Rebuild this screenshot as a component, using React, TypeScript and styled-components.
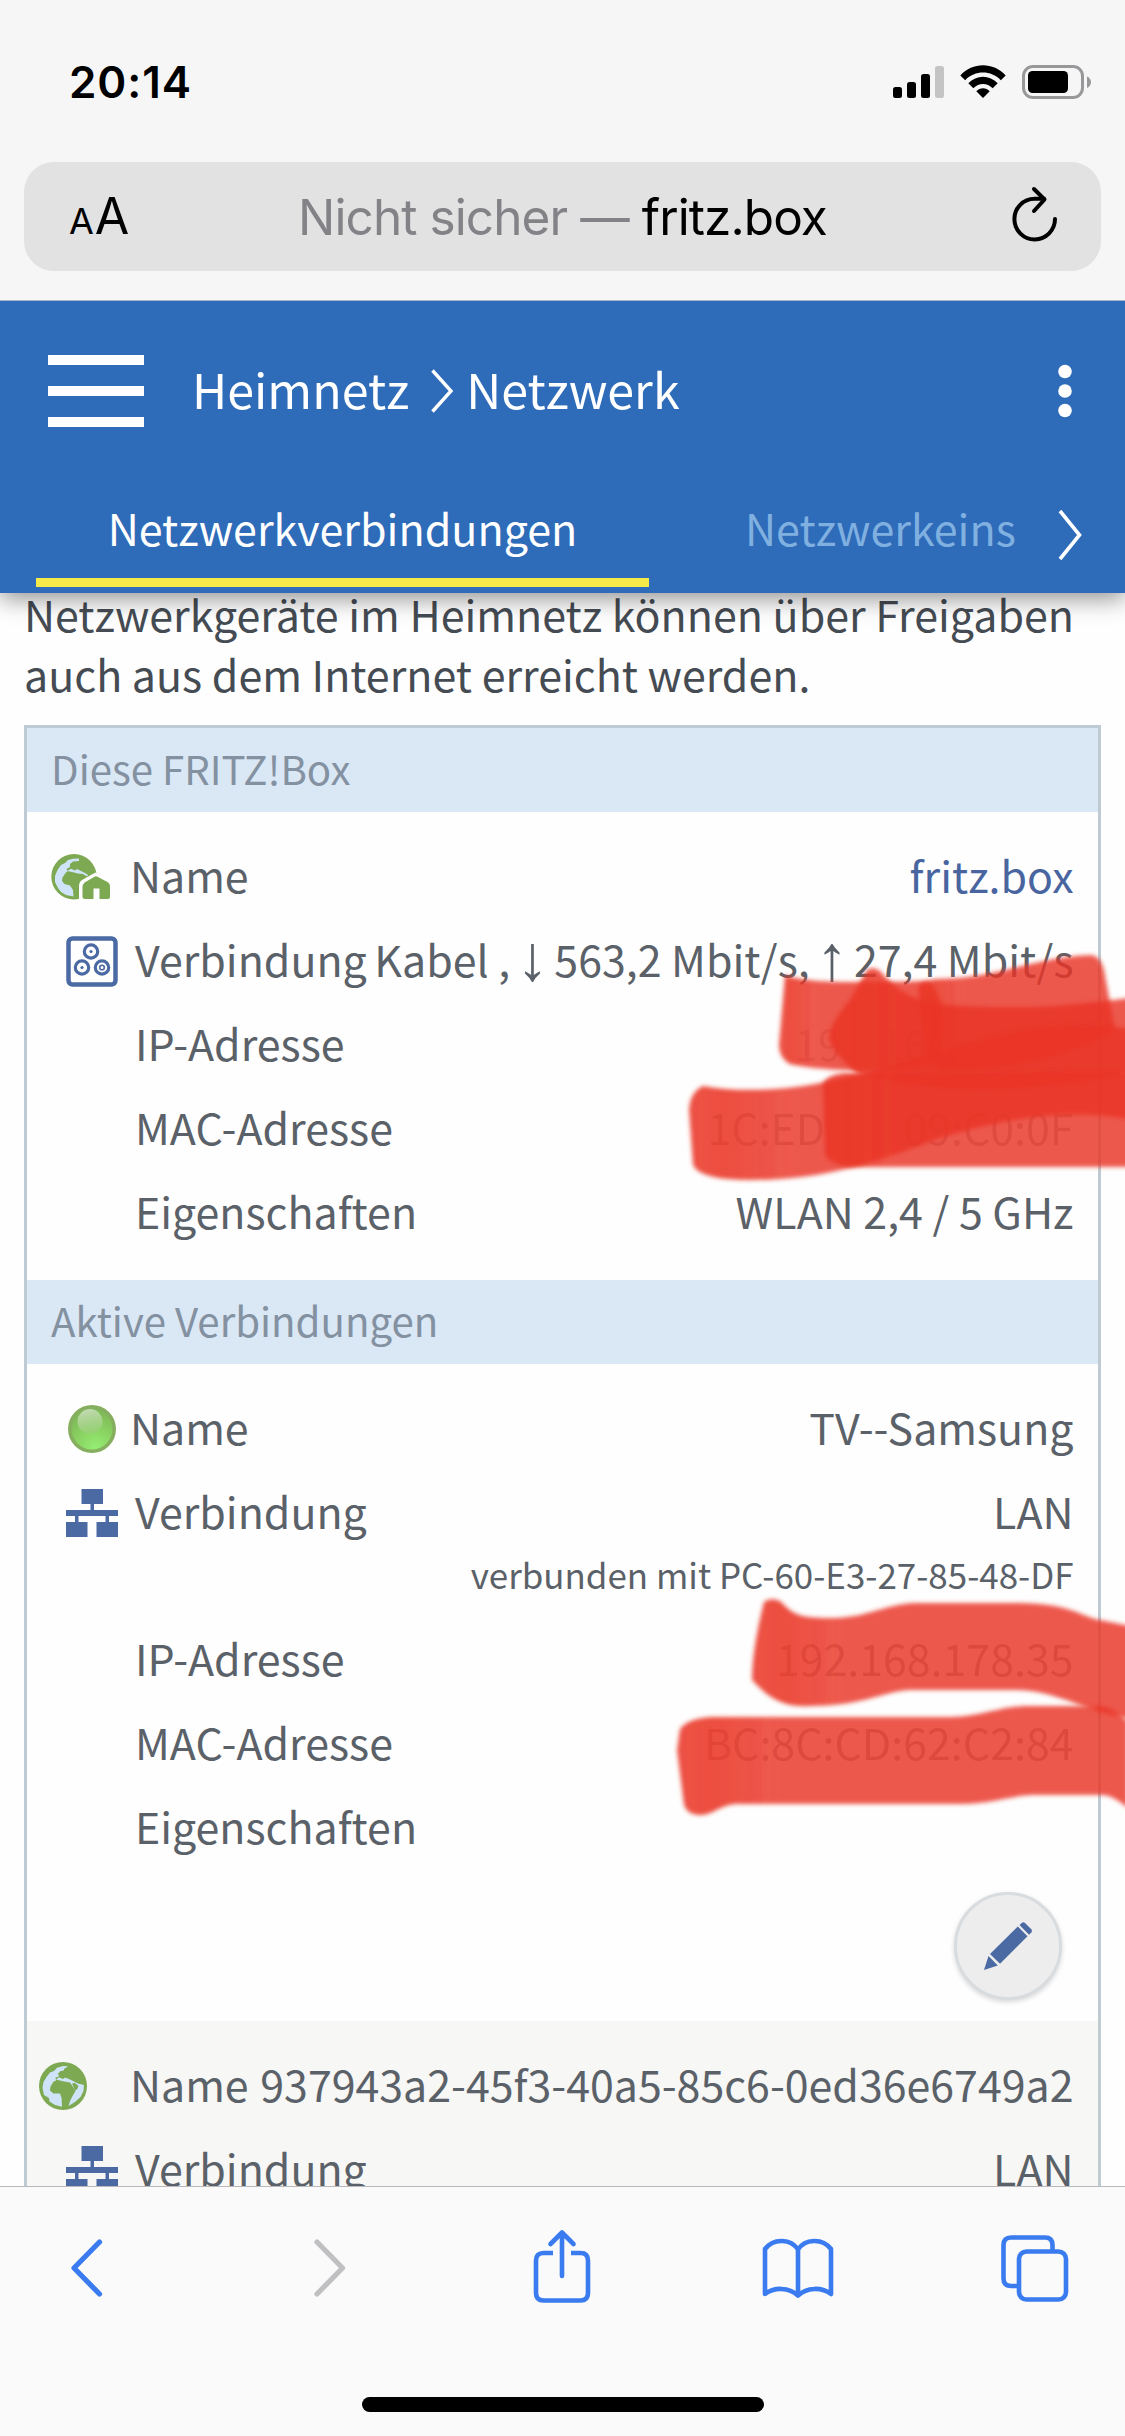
import React from "react";
import styled, { createGlobalStyle } from "styled-components";

const sans = '"Noto Sans CJK SC", "Noto Sans", sans-serif';
const system = 'Inter, "Liberation Sans", sans-serif';

const GlobalStyle = createGlobalStyle`
  *, *::before, *::after { box-sizing: border-box; }
  body { margin: 0; background: #fff; }
  svg { display: block; flex: none; }
`;

const Screen = styled.div`
  position: relative;
  display: flex;
  flex-direction: column;
  width: 1125px;
  height: 2436px;
  overflow: hidden;
  background: #fefefe;
  font-family: ${sans};
`;

/* ---------- browser chrome ---------- */

const BrowserTop = styled.header`
  position: relative;
  z-index: 2;
  flex: none;
  height: 301px;
  background: #f6f6f7;
  border-bottom: 1px solid #a9b7c8;
  font-family: ${system};
`;

const StatusBar = styled.div`
  display: flex;
  align-items: center;
  justify-content: space-between;
  height: 162px;
  padding: 2px 34px 0 69px;
`;

const Clock = styled.span`
  font-size: 44px;
  font-weight: 600;
  letter-spacing: 0.9px;
  color: #000;
`;

const StatusIcons = styled.div`
  display: flex;
  align-items: center;
  gap: 16px;
`;

const AddressBar = styled.div`
  display: flex;
  align-items: center;
  justify-content: space-between;
  height: 109px;
  margin: 0 24px;
  padding: 0 43px 0 45px;
  border-radius: 30px;
  background: #e2e2e3;
`;

const TextSize = styled.span`
  width: 72px;
  padding-top: 5px;
  font-size: 50px;
  line-height: 107px;
  letter-spacing: -1px;
  white-space: nowrap;
  color: #000;
  small { font-size: 36px; margin-right: 2px; }
`;

const Address = styled.span`
  padding: 2px 28px 0 0;
  font-size: 49.5px;
  line-height: 107px;
  letter-spacing: -0.92px;
  white-space: pre;
  color: #000;
`;

const Muted = styled.span`
  color: #838387;
`;

/* ---------- page header ---------- */

const PageHeader = styled.div`
  position: relative;
  z-index: 1;
  flex: none;
  height: 292px;
  background: #2e6bb9;
  box-shadow: 0 6px 22px rgba(0, 0, 0, 0.42);
  color: #fff;
`;

const TitleRow = styled.div`
  display: flex;
  align-items: center;
  height: 180px;
  padding: 0 53px 0 48px;
`;

const MenuButton = styled.div`
  display: flex;
  flex-direction: column;
  gap: 21px;
  width: 96px;
  margin-right: 48px;
  span { height: 10px; background: #fff; }
`;

const Crumb = styled.span`
  padding-bottom: 6px;
  font-size: 48.4px;
  line-height: 174px;
  white-space: nowrap;
`;

const CrumbArrow = styled.svg`
  margin: 0 12px 0 21px;
`;

const MoreIcon = styled.svg`
  margin-left: auto;
`;

const Tabs = styled.div`
  display: flex;
  align-items: flex-start;
  padding-left: 36px;
`;

const Tab = styled.div<{ $active?: boolean }>`
  width: 613px;
  height: 106px;
  border-bottom: 9px solid ${(p) => (p.$active ? "#f6ea4b" : "transparent")};
  font-size: 43px;
  line-height: 92px;
  text-align: center;
  white-space: nowrap;
  color: ${(p) => (p.$active ? "#fff" : "#80b0e0")};
`;

const ClippedTab = styled(Tab)`
  width: 367px;
  padding-left: 96px;
  text-align: left;
`;

const TabNext = styled.svg`
  margin: 28px 0 0 41px;
`;

/* ---------- content ---------- */

const Content = styled.main`
  flex: 1;
  min-height: 0;
  overflow: hidden;
  padding: 0 24px;
`;

const Intro = styled.p`
  height: 132px;
  margin: 0;
  font-size: 42.95px;
  line-height: 60px;
  white-space: nowrap;
  color: #454b53;
  span { display: block; }
  span:first-child { height: 50px; line-height: 40px; }
`;

const Table = styled.section`
  height: 1600px;
  border: 3px solid #bfcbd3;
`;

const SectionTitle = styled.h2`
  height: 84px;
  margin: 0;
  padding: 0 25px 0 24px;
  background: #dae7f5;
  font-size: 40.2px;
  font-weight: 400;
  line-height: 79px;
  color: #8391a1;
`;

const Device = styled.div<{ $alt?: boolean; $bottom?: number }>`
  padding: 20px 24.5px ${(p) => p.$bottom ?? 0}px 0;
  background: ${(p) => (p.$alt ? "#f7f7f5" : "#fefefe")};
`;

const Row = styled.div`
  display: flex;
  align-items: center;
  height: 84px;
  font-size: 42.9px;
  line-height: 84px;
  white-space: nowrap;
  color: #5b6168;
`;

const IconSlot = styled.div<{ $left: number; $width?: number }>`
  flex: none;
  width: ${(p) => p.$width ?? 108}px;
  padding-top: 6px;
  padding-left: ${(p) => p.$left}px;
`;

const Value = styled.span<{ $link?: boolean; $faint?: number }>`
  display: flex;
  align-items: center;
  margin-left: auto;
  white-space: pre;
  opacity: ${(p) => p.$faint ?? 1};
  color: ${(p) => (p.$link ? "#48659f" : "inherit")};
`;

const Arrow = styled.span`
  margin: 0 -3.5px;
  font-family: "Liberation Sans", sans-serif;
  font-size: 64px;
`;

const Gap = styled.span<{ $w: number }>`
  width: ${(p) => p.$w}px;
`;

const SubRow = styled.div`
  height: 63px;
  padding-top: 1px;
  font-size: 34.95px;
  line-height: 42px;
  text-align: right;
  white-space: nowrap;
  color: #5b6168;
`;

const Actions = styled.div`
  display: flex;
  justify-content: flex-end;
  padding: 25px 11.5px 21px 0;
`;

const EditButton = styled.button`
  display: flex;
  align-items: center;
  justify-content: center;
  width: 108px;
  height: 108px;
  padding: 0;
  border: 3px solid #d9dcdf;
  border-radius: 50%;
  background: #ededee;
  box-shadow: 0 2px 5px rgba(0, 0, 0, 0.16);
`;

const Marker = styled.svg`
  position: absolute;
  top: 940px;
  left: 660px;
  pointer-events: none;
`;

/* ---------- bottom toolbar ---------- */

const Toolbar = styled.footer`
  display: flex;
  flex-direction: column;
  flex: none;
  align-items: center;
  justify-content: space-between;
  height: 250px;
  padding: 42px 0 24px;
  border-top: 1px solid #b9b9bb;
  background: #fafafa;
`;

const ToolbarIcons = styled.div`
  display: grid;
  grid-template-columns: repeat(5, 236.5px);
  justify-content: center;
  justify-items: center;
  width: 100%;
  padding-right: 2px;
`;

const HomeIndicator = styled.div`
  width: 402px;
  height: 15px;
  border-radius: 8px;
  background: #000;
`;

/* ---------- icons ---------- */

const Signal = () => (
  <svg width="51" height="34" viewBox="0 0 51 34">
    <rect x="0" y="22" width="9" height="11" rx="2.5" />
    <rect x="14" y="17" width="9" height="16" rx="2.5" />
    <rect x="28" y="9" width="9" height="24" rx="2.5" />
    <rect x="42" y="1" width="9" height="32" rx="2.5" fill="#c4c4c5" />
  </svg>
);

const Wifi = () => (
  <svg width="46" height="34" viewBox="0 0 46 34">
    <path d="M0.3 10.4 C12.5-3.2 33.5-3.2 45.7 10.4 L40.8 15.2 C31 5 15 5 5.2 15.2Z" />
    <path d="M8.3 18.3 C16.4 9.4 29.6 9.4 37.7 18.3 L32.7 23.2 C27.2 17.5 18.8 17.5 13.3 23.2Z" />
    <path d="M16.3 26.3 C20 22.3 26 22.3 29.7 26.3 L23 33Z" />
  </svg>
);

const Battery = () => (
  <svg width="69" height="34" viewBox="0 0 69 34">
    <rect x="1.5" y="1.5" width="59" height="31" rx="9.5" fill="none" stroke="#98989a" strokeWidth="3" />
    <rect x="6" y="6" width="40" height="22" rx="4.5" />
    <path d="M65 11.5 C70.3 14 70.3 20.500 65 23Z" fill="#98989a" />
  </svg>
);

const Reload = () => (
  <svg width="46" height="62" viewBox="0 0 46 62" fill="none" stroke="#000" strokeWidth="4" strokeLinecap="round" strokeLinejoin="round">
    <path d="M43 33 A20.300 20.300 0 1 1 22.500 12.800 H32" />
    <path d="M22 3 L32.500 13.500 L22 25" />
  </svg>
);

const Globe = () => (
  <svg width="48" height="48" viewBox="0 0 48 48">
    <circle cx="24" cy="24" r="24" fill="#7ca952" />
    <path
      fill="#cfe4f8"
      d="M29 4.300 L24 4 L18 5.800 L15 9 L11 10.500 L7.500 15 L4.500 20 L3.500 26 L5 33 L10 36 L10.500 39.500 L16 43 L23 44.800 L22.600 36 L21 31.500 L14.500 31.500 L11 28.500 L11.500 24.500 L14.500 19.800 L17 18.500 L16.500 15.500 L20 14.500 L19 11.500 L22 9 L25 9.500 L25 7Z"
    />
    <path fill="#cfe4f8" d="M17 17.500 L20 15.300 L24 17 L26 15.500 L30 17 L34 19 L39 21.500 L45 23 L44.500 29 L41.500 35 L36 40 L29.500 44 L31 39 L33 35 L36.500 29 L34 25 L31 20.500 L25 19.500 L21 18.500Z" />
    <path fill="#7ca952" d="M21 9.500 l5 -1.500 l-3 5 l-3 0Z" />
    <path fill="#7ca952" d="M33 21.500 L36 21 L39.500 24 L38 27.500 L36 28.500Z" />
  </svg>
);

const GlobeHome = () => (
  <svg width="60" height="46" viewBox="0 0 60 46">
    <circle cx="23" cy="22.800" r="22.700" fill="#7ca952" />
    <path
      fill="#cfe4f8"
      d="M28 4.500 L22 4.800 L17 6 L14 9 L10 11 L6.500 16 L4 22 L4 28 L7 34 L10 38 L15 41 L22.500 42.500 L22 36 L19 31.500 L13.500 30 L11 27 L11.500 23.500 L14.500 19 L16.500 17.500 L15.500 15 L19 13 L19 10 L22 7.500 L28 7Z"
    />
    <path fill="#cfe4f8" d="M16 17 L20 14.800 L24 16.500 L26 15 L30 17 L34 19 L37 21 L36 22.500 L32 20 L27 19.500 L21 18Z" />
    <path fill="#fefefe" d="M28 46 V32 Q28 28 31 26 L44.500 18.500 L60 27 V46Z" />
    <path fill="#7ca952" d="M31.500 32.500 Q31.500 30 34 28.300 L44 22.500 Q45 22 46 22.500 L56.500 28 Q59 29.500 59 32 V43 Q59 45 57 45 H48.500 V34.500 H42.500 V45 H34 Q31.500 45 31.500 42.500Z" />
  </svg>
);

const CableSocket = () => (
  <svg width="52" height="51" viewBox="0 0 52 51" fill="none" stroke="#4b69a3">
    <rect x="2.500" y="2.500" width="47" height="46" rx="4" strokeWidth="4.500" />
    <g strokeWidth="3.200">
      <circle cx="25" cy="15.500" r="6.700" />
      <circle cx="16" cy="31.500" r="6.700" />
      <circle cx="36" cy="31.500" r="6.700" />
    </g>
    <g fill="#4b69a3" stroke="none">
      <circle cx="25" cy="15.500" r="1.600" />
      <circle cx="16" cy="31.500" r="1.600" />
    </g>
    <circle cx="36" cy="31.500" r="2.300" strokeWidth="1.600" />
  </svg>
);

const Online = () => (
  <svg width="48" height="48" viewBox="0 0 48 48">
    <defs>
      <radialGradient id="ball" cx="0.58" cy="0.95" r="0.85">
        <stop offset="0" stopColor="#94ee74" />
        <stop offset="0.6" stopColor="#89d060" />
        <stop offset="1" stopColor="#7fba58" />
      </radialGradient>
      <linearGradient id="gloss" x1="0.400" y1="0" x2="0.600" y2="1">
        <stop offset="0" stopColor="#c4dbb4" />
        <stop offset="1" stopColor="#97cf76" stopOpacity="0.700" />
      </linearGradient>
    </defs>
    <circle cx="24" cy="24" r="24" fill="#85ae5f" />
    <circle cx="24" cy="24" r="20.500" fill="url(#ball)" />
    <ellipse cx="22" cy="16.500" rx="12.500" ry="12.500" fill="url(#gloss)" />
  </svg>
);

const Lan = () => (
  <svg width="52" height="48" viewBox="0 0 52 48" fill="#4b69a3">
    <path d="M15.500 0 H37 V15 H28 V21 H52 V27 H43 V33 H52 V48 H30.500 V33 H39.500 V27 H12.500 V33 H21.500 V48 H0 V33 H9 V27 H0 V21 H24.500 V15 H15.500Z" />
  </svg>
);

const Pencil = () => (
  <svg width="48" height="48" viewBox="0 0 48 48" fill="#4b69a3">
    <path d="M35.500 3 L38 .8 Q39.500 -.3 41 1 L47.300 7.300 Q48.500 9 47.300 10.500 L45 12.700Z" />
    <path d="M33.800 4.600 L43.500 14.300 L16 41.800 L6 32Z" />
    <path d="M4.500 34 L13.800 43.500 L0 48Z" />
  </svg>
);

const blue = "#3a7bf0";
const line = { fill: "none", stroke: blue, strokeWidth: 4.6, strokeLinecap: "round", strokeLinejoin: "round" } as const;

const Back = () => (
  <svg width="42" height="74" viewBox="0 0 42 74" {...line} strokeWidth={5.2}>
    <path d="M31.500 13 L6 39 L31.500 65" />
  </svg>
);

const Forward = () => (
  <svg width="42" height="74" viewBox="0 0 42 74" {...line} strokeWidth={5.2} stroke="#c0c0c2">
    <path d="M13 13 L38.500 39 L13 65" />
  </svg>
);

const Share = () => (
  <svg width="58" height="74" viewBox="0 0 58 74" {...line}>
    <path strokeLinecap="butt" d="M20 24 H10.500 Q3 24 3 31.500 V64 Q3 71.500 10.500 71.500 H47.500 Q55 71.500 55 64 V31.500 Q55 24 47.500 24 H38" />
    <path d="M29 47 V4 M17.500 15 L29 3.500 L40.500 15" />
  </svg>
);

const Book = () => (
  <svg width="72" height="74" viewBox="0 0 72 74" {...line}>
    <path d="M36 20.500 C29 10 12 8.500 3 20 V65 C12 58 27 58 36 66.500 C45 58 60 58 69 65 V20 C60 8.500 43 10 36 20.500Z M36 20.500 V66" />
  </svg>
);

const TabsIcon = () => (
  <svg width="70" height="74" viewBox="0 0 70 74" {...line}>
    <path strokeLinecap="butt" d="M18 57 H11 Q3.500 57 3.500 49.500 V16 Q3.500 8.500 11 8.500 H45 Q52.500 8.500 52.500 16 V22" />
    <rect x="19" y="22.500" width="47" height="48" rx="7.500" />
  </svg>
);

const strokes = [
  "M785 975 C805 983 850 983 925 981 C948 984 950 1066 925 1066 C880 1074 815 1070 790 1064 Q779 1058 779 1045Z",
  "M918 988 Q920 980 940 979 C1000 978 1030 958 1090 955 Q1100 955 1104 970 L1115 1030 C1060 1060 1000 1070 940 1070 Q925 1060 924 1040Z",
  "M867 970 Q873 966 880 971 C905 1000 925 1006 1000 1007 C1060 1008 1090 1002 1140 997 V1070 C1040 1095 930 1090 885 1080 L858 1074 Q829 1050 829 1036 Q832 1020 850 1000Z",
  "M703 1086 C740 1093 790 1090 830 1081 C900 1066 960 1040 1040 1028 Q1090 1022 1140 1030 V1122 C1080 1108 1020 1114 940 1138 C870 1165 820 1180 750 1180 Q700 1180 693 1165 L689 1110 Q690 1092 703 1086Z",
  "M823 1085 Q825 1075 845 1073 C950 1076 1040 1070 1140 1072 V1167 H850 Q830 1164 825 1155Z",
  "M764 1602 Q770 1597 780 1601 C795 1617 803 1618 834 1618 C870 1617 885 1604 915 1603 H1002 C1060 1602 1070 1610 1095 1619 L1140 1628 V1720 C1085 1714 1060 1690 1015 1690 H908 C880 1693 860 1706 810 1706 C780 1708 765 1694 752 1680 Q752 1650 764 1602Z",
  "M680 1729 Q688 1718 712 1717 H951 C980 1717 1000 1706 1028 1706 H1102 Q1118 1710 1128 1722 V1808 Q1112 1795 1102 1795 H1032 C1010 1796 990 1804 961 1804 H735 C718 1806 712 1816 698 1815 Q687 1814 684 1805 L677 1750Z",
];

const Scribbles = () => (
  <Marker width="465" height="890" viewBox="660 940 465 890">
    <defs>
      <filter id="soft" x="-5%" y="-10%" width="110%" height="120%">
        <feGaussianBlur stdDeviation="2" />
      </filter>
      <linearGradient id="ink">
        <stop offset="0" stopColor="#ea3424" stopOpacity="0.850" />
        <stop offset="0.080" stopColor="#ea3424" stopOpacity="0.880" />
        <stop offset="0.220" stopColor="#ea3526" stopOpacity="0.820" />
        <stop offset="1" stopColor="#ea3526" stopOpacity="0.820" />
      </linearGradient>
    </defs>
    {strokes.map((d) => (
      <path key={d} d={d} fill="url(#ink)" filter="url(#soft)" />
    ))}
  </Marker>
);

export default function App() {
  return (
    <>
      <GlobalStyle />
      <Screen>
        <BrowserTop>
          <StatusBar>
            <Clock>20:14</Clock>
            <StatusIcons>
              <Signal />
              <Wifi />
              <Battery />
            </StatusIcons>
          </StatusBar>
          <AddressBar>
            <TextSize>
              <small>A</small>A
            </TextSize>
            <Address>
              <Muted>Nicht sicher — </Muted>fritz.box
            </Address>
            <Reload />
          </AddressBar>
        </BrowserTop>

        <PageHeader>
          <TitleRow>
            <MenuButton>
              <span />
              <span />
              <span />
            </MenuButton>
            <Crumb>Heimnetz</Crumb>
            <CrumbArrow width="24" height="44" viewBox="0 0 24 44" fill="none" stroke="#fff" strokeWidth="3.4">
              <path d="M2.500 1.500 L21 22 L2.500 42.500" />
            </CrumbArrow>
            <Crumb>Netzwerk</Crumb>
            <MoreIcon width="14" height="54" viewBox="0 0 14 54" fill="#fff">
              <circle cx="7" cy="7.500" r="6.800" />
              <circle cx="7" cy="27" r="6.800" />
              <circle cx="7" cy="46.500" r="6.800" />
            </MoreIcon>
          </TitleRow>
          <Tabs>
            <Tab $active>Netzwerkverbindungen</Tab>
            <ClippedTab>Netzwerkeins</ClippedTab>
            <TabNext width="26" height="52" viewBox="0 0 26 52" fill="none" stroke="#fff" strokeWidth="3.600">
              <path d="M3 2 L22.500 26 L3 50" />
            </TabNext>
          </Tabs>
        </PageHeader>

        <Content>
          <Intro>
            <span>Netzwerkgeräte im Heimnetz können über Freigaben</span>
            <span>auch aus dem Internet erreicht werden.</span>
          </Intro>
          <Table>
            <SectionTitle>Diese FRITZ!Box</SectionTitle>
            <Device $bottom={28}>
              <Row>
                <IconSlot $left={24} $width={103}>
                  <GlobeHome />
                </IconSlot>
                Name<Value $link>fritz.box</Value>
              </Row>
              <Row>
                <IconSlot $left={39}>
                  <CableSocket />
                </IconSlot>
                Verbindung
                <Value>
                  Kabel , <Arrow>↓</Arrow> 563,2 Mbit/s, <Arrow>↑</Arrow> 27,4 Mbit/s
                </Value>
              </Row>
              <Row>
                <IconSlot $left={39} />
                IP-Adresse
                <Value $faint={0.3}>
                  19<Gap $w={38} />
                  16<Gap $w={146} />
                </Value>
              </Row>
              <Row>
                <IconSlot $left={39} />
                MAC-Adresse
                <Value $faint={0.45}>
                  1C:ED
                  <Gap $w={78} />
                  09:C0:0F
                </Value>
              </Row>
              <Row>
                <IconSlot $left={39} />
                Eigenschaften<Value>WLAN 2,4 / 5 GHz</Value>
              </Row>
            </Device>
            <SectionTitle>Aktive Verbindungen</SectionTitle>
            <Device>
              <Row>
                <IconSlot $left={41} $width={103}>
                  <Online />
                </IconSlot>
                Name<Value>TV--Samsung</Value>
              </Row>
              <Row>
                <IconSlot $left={39}>
                  <Lan />
                </IconSlot>
                Verbindung<Value>LAN</Value>
              </Row>
              <SubRow>verbunden mit PC-60-E3-27-85-48-DF</SubRow>
              <Row>
                <IconSlot $left={39} />
                IP-Adresse<Value $faint={0.5}>192.168.178.35</Value>
              </Row>
              <Row>
                <IconSlot $left={39} />
                MAC-Adresse<Value $faint={0.5}>BC:8C:CD:62:C2:84</Value>
              </Row>
              <Row>
                <IconSlot $left={39} />
                Eigenschaften
              </Row>
              <Actions>
                <EditButton aria-label="Bearbeiten">
                  <Pencil />
                </EditButton>
              </Actions>
            </Device>
            <Device $alt>
              <Row>
                <IconSlot $left={12} $width={103}>
                  <Globe />
                </IconSlot>
                Name<Value>937943a2-45f3-40a5-85c6-0ed36e6749a2</Value>
              </Row>
              <Row>
                <IconSlot $left={39}>
                  <Lan />
                </IconSlot>
                Verbindung<Value>LAN</Value>
              </Row>
            </Device>
          </Table>
        </Content>

        <Toolbar>
          <ToolbarIcons>
            <Back />
            <Forward />
            <Share />
            <Book />
            <TabsIcon />
          </ToolbarIcons>
          <HomeIndicator />
        </Toolbar>
        <Scribbles />
      </Screen>
    </>
  );
}
